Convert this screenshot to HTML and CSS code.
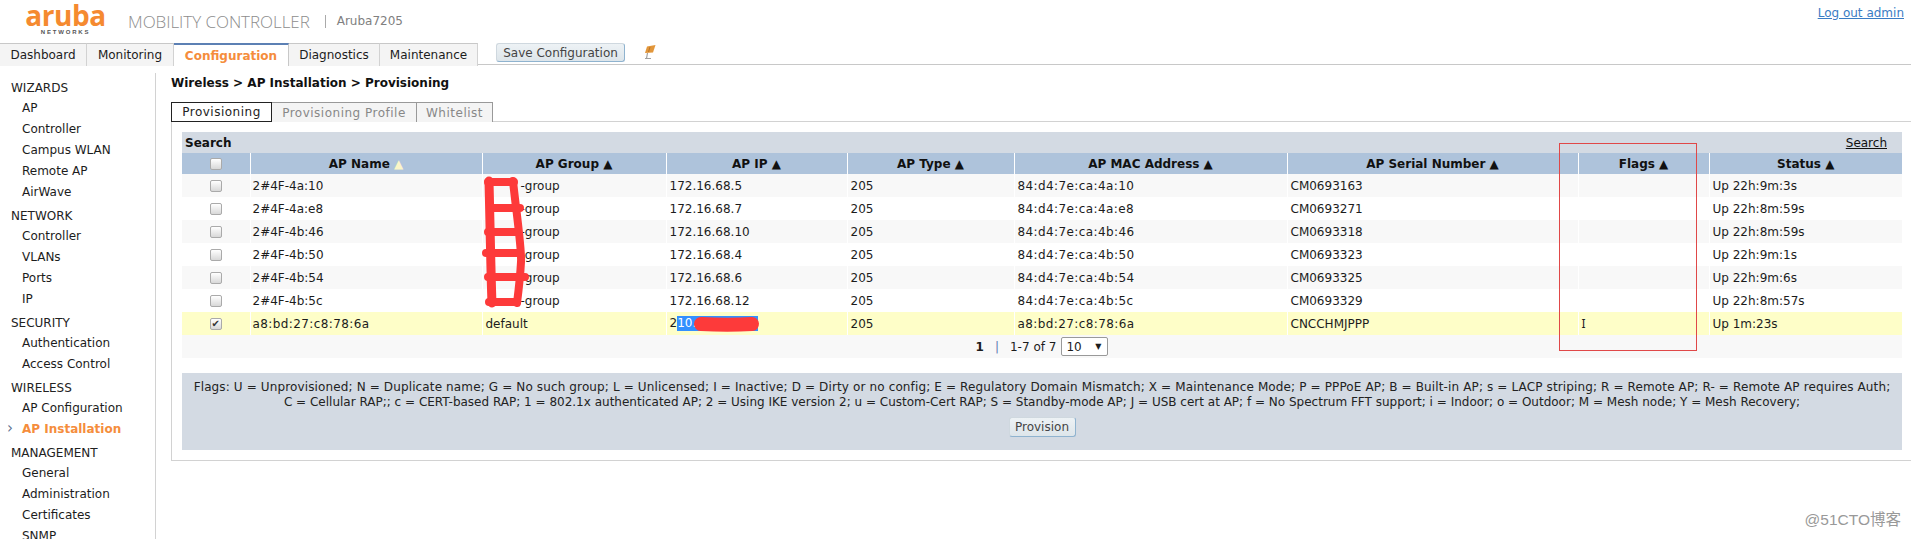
FILE: index.html
```html
<!DOCTYPE html>
<html lang="en">
<head>
<meta charset="utf-8">
<title>Aruba Mobility Controller</title>
<link rel="stylesheet" href="styles.css">
</head>
<body>
<header class="top">
  <div class="brand">
    <div class="logo"><span class="logo-word">aruba</span><span class="logo-sub">NETWORKS</span></div>
    <span class="product">MOBILITY CONTROLLER</span>
    <span class="model">Aruba7205</span>
  </div>
  <a class="logout" href="#">Log out admin</a>
</header>
<nav class="mainnav">
  <a class="mtab t1">Dashboard</a><a class="mtab t2">Monitoring</a><a class="mtab t3 on">Configuration</a><a class="mtab t4">Diagnostics</a><a class="mtab t5">Maintenance</a>
  <button class="btn save">Save Configuration</button>
  <svg class="pin" width="12" height="14" viewBox="0 0 12 14"><path d="M3 1.5 11.5 0 9 7.5 1 8z" fill="#e2963a"/><path d="M6 2 4.5 7" stroke="#b8742a" fill="none"/><path d="M3.5 8 2.5 13.5M1 13.5h6" stroke="#a0a0a0" stroke-width="1.2" fill="none"/></svg>
</nav>
<div class="body">
  <aside class="side">
    <h4>WIZARDS</h4>
    <a>AP</a><a>Controller</a><a>Campus WLAN</a><a>Remote AP</a><a>AirWave</a>
    <h4>NETWORK</h4>
    <a>Controller</a><a>VLANs</a><a>Ports</a><a>IP</a>
    <h4>SECURITY</h4>
    <a>Authentication</a><a>Access Control</a>
    <h4>WIRELESS</h4>
    <a>AP Configuration</a><a class="cur">AP Installation</a>
    <h4>MANAGEMENT</h4>
    <a>General</a><a>Administration</a><a>Certificates</a><a>SNMP</a>
  </aside>
  <main class="content">
    <div class="crumb">Wireless &gt; AP Installation &gt; Provisioning</div>
    <div class="subtabs"><a class="stab s1 on">Provisioning</a><a class="stab s2">Provisioning Profile</a><a class="stab s3">Whitelist</a></div>
    <section class="panel">
      <div class="searchbar"><b>Search</b><a href="#">Search</a></div>
      <table class="grid">
        <colgroup><col class="c0"><col class="c1"><col class="c2"><col class="c3"><col class="c4"><col class="c5"><col class="c6"><col class="c7"><col class="c8"></colgroup>
        <thead><tr>
          <th><span class="cb"></span></th><th>AP Name <i class="asc">▲</i></th><th>AP Group ▲</th><th>AP IP ▲</th><th>AP Type ▲</th><th>AP MAC Address ▲</th><th>AP Serial Number ▲</th><th>Flags ▲</th><th>Status ▲</th>
        </tr></thead>
        <tbody>
          <tr><td><span class="cb"></span></td><td>2#4F-4a:10</td><td class="grp">-group</td><td>172.16.68.5</td><td>205</td><td class="sp">84:d4:7e:ca:4a:10</td><td>CM0693163</td><td></td><td>Up 22h:9m:3s</td></tr>
          <tr><td><span class="cb"></span></td><td>2#4F-4a:e8</td><td class="grp">-group</td><td>172.16.68.7</td><td>205</td><td class="sp">84:d4:7e:ca:4a:e8</td><td>CM0693271</td><td></td><td>Up 22h:8m:59s</td></tr>
          <tr><td><span class="cb"></span></td><td>2#4F-4b:46</td><td class="grp">-group</td><td>172.16.68.10</td><td>205</td><td class="sp">84:d4:7e:ca:4b:46</td><td>CM0693318</td><td></td><td>Up 22h:8m:59s</td></tr>
          <tr><td><span class="cb"></span></td><td>2#4F-4b:50</td><td class="grp">-group</td><td>172.16.68.4</td><td>205</td><td class="sp">84:d4:7e:ca:4b:50</td><td>CM0693323</td><td></td><td>Up 22h:9m:1s</td></tr>
          <tr><td><span class="cb"></span></td><td>2#4F-4b:54</td><td class="grp">-group</td><td>172.16.68.6</td><td>205</td><td class="sp">84:d4:7e:ca:4b:54</td><td>CM0693325</td><td></td><td>Up 22h:9m:6s</td></tr>
          <tr><td><span class="cb"></span></td><td>2#4F-4b:5c</td><td class="grp">-group</td><td>172.16.68.12</td><td>205</td><td class="sp">84:d4:7e:ca:4b:5c</td><td>CM0693329</td><td></td><td>Up 22h:8m:57s</td></tr>
          <tr class="sel"><td><span class="cb chk">✔</span></td><td class="sp">a8:bd:27:c8:78:6a</td><td>default</td><td>2<span class="hl">10.</span></td><td>205</td><td class="sp">a8:bd:27:c8:78:6a</td><td>CNCCHMJPPP</td><td class="fl">I</td><td>Up 1m:23s</td></tr>
        </tbody>
      </table>
      <div class="pager"><b>1</b><span class="bar">|</span><span>1-7 of 7</span><span class="select">10<i>▼</i></span></div>
      <div class="flags">
        <p>Flags: U = Unprovisioned; N = Duplicate name; G = No such group; L = Unlicensed; I = Inactive; D = Dirty or no config; E = Regulatory Domain Mismatch; X = Maintenance Mode; P = PPPoE AP; B = Built-in AP; s = LACP striping; R = Remote AP; R- = Remote AP requires Auth;<br>C = Cellular RAP;; c = CERT-based RAP; 1 = 802.1x authenticated AP; 2 = Using IKE version 2; u = Custom-Cert RAP; S = Standby-mode AP; J = USB cert at AP; f = No Spectrum FFT support; i = Indoor; o = Outdoor; M = Mesh node; Y = Mesh Recovery;</p>
        <button class="btn prov">Provision</button>
      </div>
    </section>
  </main>
</div>
<svg class="overlay" width="1911" height="539" viewBox="0 0 1911 539">
  <g fill="none" stroke="#fd3a3a" stroke-linecap="round" stroke-linejoin="round">
    <path stroke-width="9" d="M489 181 C490 220 491 280 492 303"/>
    <path stroke-width="8" d="M513 181 C516 210 522 250 521 262 C520 280 518 295 517 303"/>
    <path stroke-width="8" d="M488 182H514M491 208H520M488 232H517M486 253H519M488 277H525M489 302H517"/>
    <path stroke-width="14" d="M701 324 C720 325 735 325 752 324"/>
  </g>
  <rect x="1559.5" y="143.5" width="137" height="207" fill="none" stroke="#e04848"/>
</svg>
<div class="mark">@51CTO博客</div>
</body>
</html>
```
FILE: styles.css
```css
* { box-sizing: border-box; }
html, body { margin: 0; height: 539px; overflow: hidden; background: #fff; }
body { font: 12px "DejaVu Sans", "Noto Sans", sans-serif; color: #1c1c1c; position: relative; }
a { text-decoration: none; }
.top { height: 43px; display: flex; justify-content: space-between; }
.brand { display: flex; align-items: center; padding-left: 25px; }
.logo { display: flex; flex-direction: column; align-items: center; width: 81px; height: 36px; }
.logo-word { font: 700 28px/23px "Open Sans", sans-serif; color: #f58a30; letter-spacing: -.4px; }
.logo-sub { font: bold 6px/9px "Liberation Sans", sans-serif; letter-spacing: 1.8px; color: #555; margin-top: 1px; }
.product { font: 300 17px "Open Sans", sans-serif; color: #8d8d8d; margin-left: 22px; letter-spacing: -.05px; white-space: nowrap; }
.model { color: #808080; margin-left: 15px; padding-left: 11px; border-left: 1px solid #aaa; line-height: 13px; }
.logout { color: #3a7cc4; margin: 6px 7px 0 0; height: 17px; text-decoration: underline; }
.mainnav { height: 22px; display: flex; align-items: flex-start; border-bottom: 1px solid #c8c8c8; }
.mtab { height: 23px; line-height: 22px; text-align: center; background: #f4f4f4; border-top: 1px solid #c8c8c8; border-right: 1px solid #d2d2d2; white-space: nowrap; flex: none; }
.t1 { width: 87px; } .t2 { width: 87px; } .t3 { width: 115px; } .t4 { width: 91px; } .t5 { width: 98px; }
.mtab.on { background: #fff; color: #f58d3c; font-weight: 700; border-top: 2px solid #5c80b4; border-right-color: #c8c8c8; position: relative; }
.btn { font: 12px "DejaVu Sans", sans-serif; color: #444; background: linear-gradient(#edf2f5, #dde5ea); border: 1px solid #cfd8df; border-bottom-color: #8fb3cf; border-right-color: #8fb3cf; border-radius: 3px; padding: 0; height: 19px; white-space: nowrap; }
.save { margin-left: 18px; width: 129px; }
.pin { margin: 2px 0 0 19px; }
.body { display: flex; height: 466px; margin-top: 8px; }
.side { width: 156px; padding: 5px 0 0 11px; border-right: 1px solid #d2d2d2; flex: none; overflow: hidden; }
.side h4 { margin: 0; font-weight: 400; height: 20px; line-height: 20px; color: #222; }
.side a { display: block; height: 21px; line-height: 21px; padding-left: 11px; }
.side a + h4 { margin-top: 3px; }
.side a.cur { color: #f58d3c; font-weight: 700; position: relative; }
.side a.cur::before { content: "›"; position: absolute; left: -4px; top: -1px; color: #5c7090; font-weight: 400; font-size: 15px; }
.content { flex: 1; padding: 0 0 0 15px; min-width: 0; }
.crumb { font-weight: 700; color: #111; height: 29px; line-height: 20px; }
.subtabs { display: flex; height: 20px; }
.stab { height: 20px; line-height: 20px; text-align: center; background: #f4f4f4; color: #888; border-top: 1px solid #999; border-right: 1px solid #999; white-space: nowrap; flex: none; letter-spacing: .5px; }
.stab.on { background: #fff; color: #222; border: 1px solid #222; line-height: 18px; }
.s1 { width: 101px; } .s2 { width: 145px; } .s3 { width: 76px; }
.panel { height: 340px; margin-top: -1px; border: 1px solid #d2d2d2; border-right: 0; padding: 10px 0 0 10px; }
.searchbar { width: 1720px; height: 21px; background: #d3dae3; display: flex; justify-content: space-between; align-items: center; padding: 0 15px 0 3px; color: #111; }
.searchbar a { color: #111; text-decoration: underline; }
.grid { table-layout: fixed; width: 1720px; border-collapse: collapse; }
.c0 { width: 68px; } .c1 { width: 232px; } .c2 { width: 184px; } .c3 { width: 181px; } .c4 { width: 167px; }
.c5 { width: 273px; } .c6 { width: 291px; } .c7 { width: 131px; } .c8 { width: 193px; }
.grid th { height: 21px; padding: 0; background: #aec3db; color: #111; font-weight: 700; border-left: 1px solid #fff; text-align: center; white-space: nowrap; }
.grid th:first-child { border-left: 0; }
.asc { font-style: normal; color: #fbf6c8; }
.grid td { height: 23px; padding: 0 0 0 3px; border-left: 1px solid #fff; white-space: nowrap; }
.grid td:first-child { border-left: 0; padding: 0; text-align: center; }
.grid td:nth-child(2) { padding-left: 2px; }
.grid td.sp { letter-spacing: .4px; }
.grid td.grp { padding-left: 38px; }
.grid td.fl { font-family: "Noto Sans", sans-serif; }
.grid tbody tr:nth-child(odd) td { background: #f8f8f8; }
.grid tbody tr:nth-child(even) td { background: #fff; }
.grid tbody tr.sel td { background: #fefec8; }
.cb { display: inline-block; width: 12px; height: 12px; border: 1px solid #aaa; border-radius: 2px; background: linear-gradient(#fff, #d8d8d8); vertical-align: middle; font-size: 10px; line-height: 10px; color: #333; text-align: center; }
.hl { background: #3390ff; color: #fff; display: inline-block; width: 81px; line-height: 15px; }
.pager { width: 1720px; height: 23px; background: #f8f8f8; display: flex; justify-content: center; align-items: center; }
.pager b { margin-right: 11px; }
.bar { color: #5a7ab0; margin-right: 11px; }
.select { width: 47px; height: 19px; margin-left: 5px; border: 1px solid #999; border-radius: 2px; background: #fff; display: flex; justify-content: space-between; align-items: center; padding: 0 6px 0 4px; }
.select i { font-style: normal; font-size: 8px; }
.flags { width: 1720px; height: 77px; margin-top: 15px; background: #d3dae3; text-align: center; padding-top: 7px; color: #222; }
.flags p { margin: 0 0 7px; line-height: 15px; }
.flags p::first-line { letter-spacing: .13px; }
.prov { width: 67px; height: 20px; }
.overlay { position: absolute; left: 0; top: 0; pointer-events: none; }
.mark { position: absolute; right: 10px; top: 511px; font: 15.5px/18px "Liberation Sans", "Noto Sans CJK SC", sans-serif; color: #999; }
```
